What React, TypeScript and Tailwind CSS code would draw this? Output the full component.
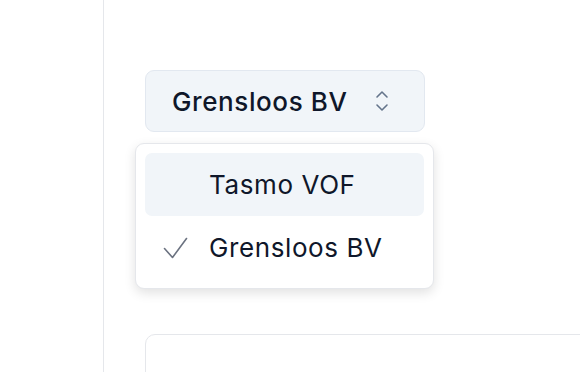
import React from "react";

export default function App() {
  return (
    <div className="flex h-[372px] w-[580px] overflow-hidden bg-white" style={{ fontFamily: "Inter, 'Noto Sans', sans-serif" }}>
      <div className="w-[104px] shrink-0 border-r border-[#e5e7eb]" />
      <div className="flex flex-1 flex-col pl-[41px] pt-[70px]">
        <div className="relative">
          <button className="flex h-[62px] w-[280px] items-center justify-between rounded-[9px] border border-[#e2e8f0] bg-[#f1f5f9] pl-[26px] pr-[35px] text-[26px] font-medium tracking-[0.6px] text-[#0f172a]">
            <span>Grensloos BV</span>
            <svg width="14" height="22" viewBox="0 0 14 22" fill="none" stroke="#64748b" strokeWidth="1.6" strokeLinecap="round" strokeLinejoin="round">
              <path d="M2 7l5-5 5 5" />
              <path d="M2 15l5 5 5-5" />
            </svg>
          </button>
          <div className="absolute left-[-10px] top-[73px] z-10 w-[299px] rounded-[9px] border border-[#e5e7eb] bg-white p-[9px] shadow-[0_4px_12px_rgba(0,0,0,0.12)]">
            <div className="flex h-[63px] items-center rounded-[7px] bg-[#f1f5f9] pl-[64px] text-[26px] tracking-[0.6px] text-[#0f172a]">
              Tasmo VOF
            </div>
            <div className="relative flex h-[63px] items-center pl-[64px] text-[26px] tracking-[0.6px] text-[#0f172a]">
              <svg className="absolute left-[18px] top-[21px]" width="25" height="22" viewBox="0 0 25 22" fill="none" stroke="#6b7280" strokeWidth="1.6" strokeLinecap="round" strokeLinejoin="round">
                <path d="M1.5 11.5l8 9L23.5 1.5" />
              </svg>
              Grensloos BV
            </div>
          </div>
        </div>
        <div className="mt-[202px] h-[60px] w-[500px] shrink-0 rounded-[10px] border border-[#e5e7eb]" />
      </div>
    </div>
  );
}
